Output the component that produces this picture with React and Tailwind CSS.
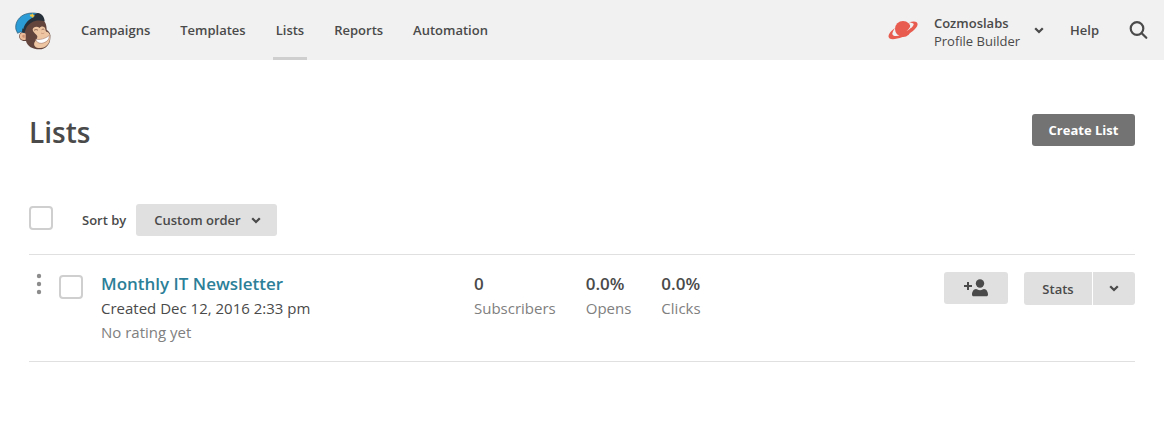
import { useState } from 'react'

const navItems = ['Campaigns', 'Templates', 'Lists', 'Reports', 'Automation']

const lists = [
  {
    id: 1,
    name: 'Monthly IT Newsletter',
    created: 'Created Dec 12, 2016 2:33 pm',
    rating: 'No rating yet',
    stats: [
      { label: 'Subscribers', value: '0' },
      { label: 'Opens', value: '0.0%' },
      { label: 'Clicks', value: '0.0%' },
    ],
  },
]

function Chevron({ className = '' }) {
  return (
    <svg viewBox="0 0 10 7" className={`w-[10px] h-[7px] shrink-0 ${className}`} aria-hidden="true">
      <path d="M1.200 1.300 5 5l3.800-3.700" fill="none" stroke="currentColor" strokeWidth="2.300" />
    </svg>
  )
}

function MonkeyLogo() {
  return (
    <svg viewBox="45 36 111 117" className="w-[37px] h-[39px]" role="img" aria-label="MailChimp">
      {/* head */}
      <path
        d="M72 90C78 70 100 58 126 60C136 66 140 80 140 92C149 98 153 106 151 116C151 136 137 151 118 151C98 151 82 142 78 126C64 128 55 118 58 108C60 101 66 98 72 99Z"
        fill="#63453d"
      />
      {/* ear */}
      <path d="M77 104C69 98 59 102 59 111C59 120 67 126 77 122Z" fill="#ecbc98" />
      <path d="M74 108c-5-2-8 1-7 5 1 3 3 4 7 3Z" fill="#c98f70" />
      {/* face */}
      <path
        d="M98 91C100 82 112 81 119 87C122 81 131 81 135 87C137 92 136 96 139 98C148 100 152 108 150 118C149 134 138 147 122 147C107 148 100 140 103 131C106 124 113 119 112 112C110 105 98 101 98 91Z"
        fill="#efc6a3"
      />
      <path d="M102 94c4-3 9-3 12 0M125 92c3-2 6-2 8 0" fill="none" stroke="#7c5548" strokeWidth="2.500" />
      <path d="M123 102c3 2 7 2 10 0" fill="none" stroke="#b98468" strokeWidth="2" />
      {/* grin */}
      <path d="M107 120C119 124 137 119 148 109C149 122 139 131 124 133C114 133 108 128 107 120Z" fill="#fff" stroke="#8e6152" strokeWidth="1.500" />
      {/* cap */}
      <path
        d="M48 92C44 76 53 56 72 47C87 41 105 40 119 46C112 52 91 57 82 72C76 80 74 90 73 101C64 97 58 99 53 103Z"
        fill="#2c9cd6"
        stroke="#24526d"
        strokeWidth="2"
      />
      <path
        d="M66 99C67 74 86 53 113 42C124 42 134 54 134 67C110 60 90 68 79 86L73 102Z"
        fill="#27313b"
      />
      <path d="M62 84C64 68 76 55 97 46L104 53C87 59 74 73 70 90Z" fill="#2c9cd6" />
      <path d="m89 46 5 1 3-4 3 5 5 1-4 3-2 5-4-4-6-2 2-3Z" fill="#f4c339" />
    </svg>
  )
}

function PlanetIcon() {
  return (
    <svg viewBox="0 0 30 20" className="w-[30px] h-5 shrink-0" aria-hidden="true">
      <circle cx="15" cy="9" r="8" fill="#e85c4f" />
      <path
        d="M21 2.300C26 .8 29.800 1.200 29.600 4.500C29 8.800 22 14 14.500 17C7 19.800.5 20 .5 16.600C.6 13.600 3.500 10.500 7 8C5 11 3.700 13.700 5 15C7.400 17 13.500 14.700 18.300 11.700C23.300 8.500 26.500 5 25.500 3.800C24.900 3 23.500 2.800 21 2.300Z"
        fill="#e85c4f"
      />
      <path d="M22.500 3.700C24.800 3.600 25.200 4.800 23.800 6.800C22.600 8.600 20.500 10.200 18.500 11.300C21.500 8.500 22.800 6.500 22.500 3.700Z" fill="#f1f1f1" />
      <path d="M6.500 10.500C4.200 13.300 4 15.500 7 15.900C8.400 16 10 15.700 11.500 15.200C8.500 15 7 13.500 6.500 10.500Z" fill="#f1f1f1" />
    </svg>
  )
}

function AddUserIcon() {
  return (
    <svg viewBox="0 0 24 18" className="w-6 h-[18px]" fill="currentColor" aria-hidden="true">
      <path d="M3 3h2v3h3v2H5v3H3V8H0V6h3Z" />
      <circle cx="16" cy="4.500" r="4.200" />
      <path d="M12 10c1.200 0 1.500 1.200 4 1.200S18.800 10 20 10c2.500 0 4 3 4 5.500 0 1.200-.6 1.800-1.500 1.800h-13C8.600 17.300 8 16.700 8 15.500 8 13 9.500 10 12 10Z" />
    </svg>
  )
}

function Checkbox({ label, checked, onChange }) {
  return (
    <input
      type="checkbox"
      aria-label={label}
      checked={checked}
      onChange={onChange}
      className="appearance-none block w-6 h-6 shrink-0 rounded border-2 border-[#cfcfcf] bg-white checked:bg-[#2c7f98]"
    />
  )
}

function Header() {
  return (
    <header className="flex justify-between h-[60px] pl-[15px] pr-4 bg-[#f1f1f1] text-[13px] leading-5 font-semibold">
      <div className="flex">
        <a href="#home" className="self-center mr-[26px]">
          <MonkeyLogo />
        </a>
        <nav className="flex gap-6">
          {navItems.map((item) => (
            <a
              key={item}
              href={`#${item.toLowerCase()}`}
              className={`flex items-center px-[3px] border-y-3 border-t-transparent ${
                item === 'Lists' ? 'border-b-[#cfcfcf]' : 'border-b-transparent'
              }`}
            >
              {item}
            </a>
          ))}
        </nav>
      </div>

      <div className="flex items-center">
        <button type="button" className="flex items-center text-left leading-[18px]">
          <PlanetIcon />
          <span className="ml-4 mr-[14px] mt-1">
            <span className="block">Cozmoslabs</span>
            <span className="block font-normal">Profile Builder</span>
          </span>
          <Chevron />
        </button>
        <a href="#help" className="ml-[26px] mr-[30px]">Help</a>
        <button type="button" aria-label="Search">
          <svg viewBox="0 0 19 19" className="w-[19px] h-[19px]" fill="none" stroke="currentColor" strokeWidth="2.200" aria-hidden="true">
            <circle cx="8" cy="7.500" r="6.300" />
            <path d="m12.700 12.200 4.600 4.600" strokeLinecap="round" />
          </svg>
        </button>
      </div>
    </header>
  )
}

function ListRow({ list, checked, onToggle }) {
  return (
    <li className="flex py-[17px] border-b border-[#e0e0e0] leading-6 text-[15px]">
      <button type="button" aria-label="Reorder" className="w-5 h-6 mr-[10px] shrink-0 text-[#8c8c8c]">
        <svg viewBox="0 0 20 24" className="w-5 h-6" fill="currentColor" aria-hidden="true">
          <circle cx="10" cy="4" r="2.200" />
          <circle cx="10" cy="12" r="2.200" />
          <circle cx="10" cy="20" r="2.200" />
        </svg>
      </button>
      <div className="pt-[3px] mr-[18px]">
        <Checkbox label={`Select ${list.name}`} checked={checked} onChange={onToggle} />
      </div>

      <div className="flex flex-1">
        <div className="w-[373px]">
          <h2 className="text-[17px] leading-6 font-semibold text-[#2c7f98]">
            <a href="#list">{list.name}</a>
          </h2>
          <p>{list.created}</p>
          <p className="text-[#808080]">{list.rating}</p>
        </div>
        <dl className="flex gap-[30px]">
          {list.stats.map((stat) => (
            <div key={stat.label} className="flex flex-col-reverse justify-end">
              <dt className="text-[#808080]">{stat.label}</dt>
              <dd className="text-[17px] font-semibold">{stat.value}</dd>
            </div>
          ))}
        </dl>
      </div>

      <div className="flex items-start text-[13px] leading-5 font-semibold">
        <button
          type="button"
          aria-label="Add subscriber"
          className="flex items-center justify-center w-16 h-8 mr-4 rounded-[3px] bg-[#e0e0e0]"
        >
          <AddUserIcon />
        </button>
        <button type="button" className="h-[33px] w-[68px] mr-px rounded-l-[3px] bg-[#e0e0e0]">
          Stats
        </button>
        <button
          type="button"
          aria-label="More actions"
          className="flex items-center justify-center w-[42px] h-[33px] rounded-r-[3px] bg-[#e0e0e0]"
        >
          <Chevron />
        </button>
      </div>
    </li>
  )
}

export default function App() {
  const [selected, setSelected] = useState([])
  const [order, setOrder] = useState('custom')

  const allSelected = selected.length === lists.length

  const toggleAll = () => {
    setSelected(allSelected ? [] : lists.map((list) => list.id))
  }

  const toggleOne = (id) => {
    setSelected((prev) =>
      prev.includes(id) ? prev.filter((item) => item !== id) : [...prev, id]
    )
  }

  return (
    <div className="min-h-screen bg-white text-[#4a4a4a] font-['Open_Sans',sans-serif]">
      <Header />

      <main className="px-[29px] pt-[54px] pb-10">
        <div className="flex justify-between mb-[58px]">
          <h1 className="text-[28px] leading-9 h-8 font-semibold">Lists</h1>
          <button
            type="button"
            className="h-8 w-[103px] rounded-[3px] bg-[#737373] text-white text-[13px] leading-5 font-bold"
          >
            Create List
          </button>
        </div>

        <div className="flex items-center mb-[18px] text-[13px] leading-5">
          <div className="pb-1 mr-[29px]">
            <Checkbox label="Select all lists" checked={allSelected} onChange={toggleAll} />
          </div>
          <label htmlFor="sort" className="mr-[10px] font-semibold">Sort by</label>
          <div className="relative">
            <select
              id="sort"
              value={order}
              onChange={(e) => setOrder(e.target.value)}
              className="appearance-none block h-8 w-[141px] pl-[18px] pr-8 rounded-[3px] bg-[#e0e0e0] font-semibold"
            >
              <option value="custom">Custom order</option>
              <option value="name">List name</option>
              <option value="date">Date created</option>
            </select>
            <Chevron className="absolute right-4 top-[13px] pointer-events-none" />
          </div>
        </div>

        <ul className="border-t border-[#e0e0e0]">
          {lists.map((list) => (
            <ListRow
              key={list.id}
              list={list}
              checked={selected.includes(list.id)}
              onToggle={() => toggleOne(list.id)}
            />
          ))}
        </ul>
      </main>
    </div>
  )
}
